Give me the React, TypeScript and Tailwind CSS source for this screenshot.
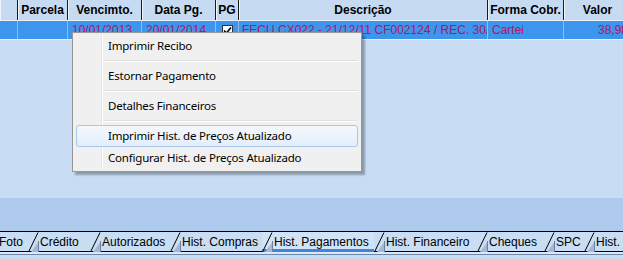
import React from 'react';

const headers = [
  { label: '', cls: 'w-[18px]' },
  { label: 'Parcela', cls: 'w-[50px]' },
  { label: 'Vencimto.', cls: 'w-[74px]' },
  { label: 'Data Pg.', cls: 'w-[74px]' },
  { label: 'PG', cls: 'w-[23px]' },
  { label: 'Descrição', cls: 'w-[249px]' },
  { label: 'Forma Cobr.', cls: 'w-[76px]' },
  { label: 'Valor', cls: 'w-[68px]' },
];

const tabs = [
  { label: 'Crédito', cls: 'w-[62px]' },
  { label: 'Autorizados', cls: 'w-[80px]' },
  { label: 'Hist. Compras', cls: 'w-[92px]' },
  { label: 'Hist. Pagamentos', cls: 'w-[112px]', active: true },
  { label: 'Hist. Financeiro', cls: 'w-[103px]' },
  { label: 'Cheques', cls: 'w-[67px]' },
  { label: 'SPC', cls: 'w-[40px]' },
  { label: 'Hist. Consultas', cls: 'w-[90px]' },
];

// the little folded corner that starts every tab
const Slant = () => (
  <svg width="11" height="20" viewBox="0 0 11 20" className="shrink-0">
    <polygon points="3,20 11,20 11,9" fill="#a7b6d6" />
    <line x1="0.5" y1="20" x2="10" y2="0.5" stroke="#000" strokeWidth="1" />
    <line x1="10.5" y1="9" x2="10.5" y2="20" stroke="#6d7fa3" strokeWidth="1" />
  </svg>
);

const MenuItem = ({ text, hover }: { text: string; hover?: boolean }) => (
  <div
    className={
      hover
        ? 'mx-[3px] flex h-[22px] items-center rounded-[3px] border border-[#a8c8ee] bg-gradient-to-b from-[#f4f8fd] to-[#e3edf9] pl-[31px]'
        : 'mx-[3px] flex h-[22px] items-center border border-transparent pl-[31px]'
    }
  >
    {text}
  </div>
);

const MenuSep = () => (
  <div className="ml-[30px] mr-[4px] flex h-[8px] flex-col justify-center">
    <div className="h-px bg-[#e0e0e0]" />
    <div className="h-px bg-white" />
  </div>
);

export default function App() {
  return (
    <div className="relative flex h-[259px] w-[623px] flex-col overflow-hidden bg-[#c8ddf4] font-['Liberation_Sans',Arial,sans-serif] text-[12px] text-black">
      {/* grid header */}
      <div className="flex h-[21px] shrink-0 border-b border-[#e9f1fb] bg-[#c6dbf2]">
        {headers.map((h, i) => (
          <div
            key={i}
            className={`${h.cls} flex shrink-0 items-center justify-center border-r border-[#1a1a1a] font-bold shadow-[inset_1px_0_0_#eef4fc]`}
          >
            {h.label}
          </div>
        ))}
      </div>

      {/* selected row */}
      <div className="flex h-[19px] shrink-0 border-b border-[#e6eefa] bg-[#3d95ee] text-[#b0175c]">
        <div className="w-[18px] shrink-0 border-r border-[#8fbdf0]" />
        <div className="w-[50px] shrink-0 border-r border-[#8fbdf0]" />
        <div className="flex w-[74px] shrink-0 items-center border-r border-[#8fbdf0] pl-[4px]">10/01/2013</div>
        <div className="flex w-[74px] shrink-0 items-center border-r border-[#8fbdf0] pl-[4px]">20/01/2014</div>
        <div className="flex w-[23px] shrink-0 items-center justify-center border-r border-[#8fbdf0]">
          <div className="flex h-[11px] w-[11px] items-center justify-center border border-[#333] bg-white">
            <svg width="9" height="9" viewBox="0 0 9 9">
              <path d="M1 4.5 L3.5 7 L8 1.5" stroke="#000" strokeWidth="1.6" fill="none" />
            </svg>
          </div>
        </div>
        <div className="flex w-[249px] shrink-0 items-center overflow-hidden whitespace-nowrap border-r border-[#8fbdf0] pl-[3px]">
          FECU CX022 - 21/12/11 CF002124 / REC. 30/12/11
        </div>
        <div className="flex w-[76px] shrink-0 items-center overflow-hidden whitespace-nowrap border-r border-[#8fbdf0] pl-[4px]">
          Cartei
        </div>
        <div className="flex w-[68px] shrink-0 items-center justify-end pr-[4px]">38,98</div>
      </div>

      <div className="h-[158px] shrink-0" />

      {/* darker strip above the tabs */}
      <div className="h-[33px] shrink-0 bg-[#aecaed]" />

      {/* tabs */}
      <div className="flex h-[21px] shrink-0 whitespace-nowrap bg-[#c9ddf3]">
        <div className="flex w-[28px] shrink-0 items-center border-y border-black pl-0">
          <span className="-ml-[1px]">Foto</span>
        </div>
        {tabs.map((t, i) => (
          <div
            key={i}
            className={
              t.active
                ? `${t.cls} flex shrink-0 items-center border-t border-black bg-[#d3e3f6] shadow-[inset_0_-3px_0_#3d86d9]`
                : `${t.cls} flex shrink-0 items-center border-y border-black`
            }
          >
            <Slant />
            <span className="pl-[1px]">{t.label}</span>
          </div>
        ))}
      </div>
      <div className="h-[2px] shrink-0 bg-[#dbe8f7]" />
      <div className="h-[1px] shrink-0 bg-[#6e86a8]" />
      <div className="flex-1 bg-[#c8ddf4]" />

      {/* context menu */}
      <div className="absolute left-[72px] top-[32px] w-[290px] border border-[#979797] bg-[#f0f0f0] py-[2px] font-['Noto_Sans',sans-serif] text-[11.5px] tracking-[-0.2px] shadow-[3px_3px_2px_rgba(0,0,0,0.3)]">
        <div className="pointer-events-none absolute bottom-[2px] left-[28px] top-[2px] w-[2px] border-l border-[#e2e3e3] border-r border-r-white" />
        <div className="relative">
          <MenuItem text="Imprimir Recibo" />
          <MenuSep />
          <MenuItem text="Estornar Pagamento" />
          <MenuSep />
          <MenuItem text="Detalhes Financeiros" />
          <MenuSep />
          <MenuItem text="Imprimir Hist. de Preços Atualizado" hover />
          <MenuItem text="Configurar Hist. de Preços Atualizado" />
        </div>
      </div>
    </div>
  );
}
